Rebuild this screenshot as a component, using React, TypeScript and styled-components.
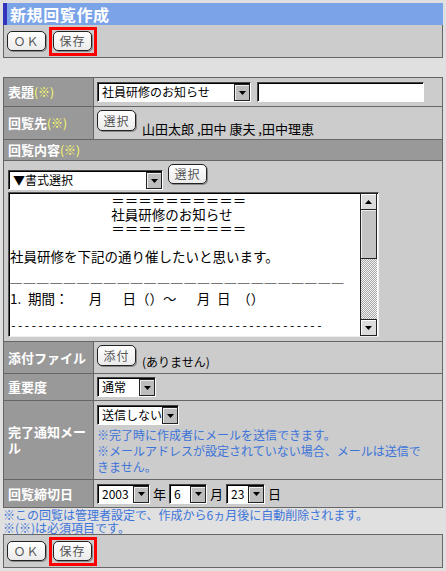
import styled, { createGlobalStyle } from 'styled-components';

const GlobalStyle = createGlobalStyle`
  body {
    margin: 0;
    background: #e0e0e0;
    font-family: 'Noto Sans CJK JP', sans-serif;
    font-size: 12px;
    color: #000;
  }
`;

const Page = styled.div`
  width: 440px;
  padding: 3px;
`;

const TitleBar = styled.h1`
  margin: 0;
  height: 22px;
  box-sizing: border-box;
  padding-left: 3px;
  border-left: 4px solid #3333bb;
  background: #7ba4e8;
  color: #fff;
  font-size: 16px;
  font-weight: bold;
  line-height: 22px;
  letter-spacing: 0.6px;
`;

const ButtonBar = styled.div<{ $closed?: boolean }>`
  display: flex;
  align-items: center;
  gap: 3px;
  height: ${(p) => (p.$closed ? 34 : 33)}px;
  box-sizing: border-box;
  padding: 0 3px;
  background: #ccc;
  border: 1px solid #666;
  border-top: ${(p) => (p.$closed ? '1px solid #666' : 'none')};
`;

const Btn = styled.button`
  height: 20px;
  min-width: 39px;
  padding: 0 4px;
  border: 1px solid #222;
  border-radius: 5px;
  background: linear-gradient(#ffffff, #ebebeb);
  box-shadow: 1px 1px 0 #8a8a8a;
  font-family: inherit;
  font-size: 12px;
  line-height: 18px;
  color: #555;
  letter-spacing: 1px;
  cursor: pointer;
`;

const RowBtn = styled(Btn)`
  height: 21px;
  flex-shrink: 0;
`;

const Highlight = styled.span`
  display: inline-flex;
  padding: 1px 2px 2px 1px;
  border: 3px solid #ff0000;
`;

const Form = styled.div`
  margin-top: 19px;
  border: 1px solid #666;
  background: #ccc;
`;

const Row = styled.div<{ $h: number }>`
  display: grid;
  grid-template-columns: 90px 1fr;
  min-height: ${(p) => p.$h}px;
  border-top: 1px solid #666;

  &:first-child {
    border-top: none;
  }
`;

const FullRow = styled.div<{ $h: number }>`
  min-height: ${(p) => p.$h}px;
  border-top: 1px solid #666;
`;

const Label = styled.div`
  display: flex;
  align-items: center;
  padding: 0 4px;
  background: #999;
  border-right: 1px solid #666;
  color: #fff;
  font-size: 13px;
  font-weight: bold;
  line-height: 16px;
`;

const HeaderLabel = styled(Label)`
  height: 20px;
  border-right: none;
`;

const Required = styled.span`
  color: #ffff66;
  font-size: 12px;
  font-weight: normal;
`;

const Value = styled.div`
  display: flex;
  align-items: center;
  gap: 3px;
  padding: 0 3px;
`;

const TopValue = styled(Value)`
  align-items: flex-start;
  padding-top: 3px;
`;

const StackValue = styled.div`
  display: flex;
  flex-direction: column;
  align-items: flex-start;
  padding: 4px 12px 0 3px;
`;

const SideText = styled.span<{ $top: number; $size: number }>`
  margin: ${(p) => p.$top}px 0 0 3px;
  font-size: ${(p) => p.$size}px;
  line-height: 14px;
  white-space: nowrap;
`;

const UnitText = styled.span`
  font-size: 13px;
`;

const Hint = styled.p`
  margin: 2px 0 0;
  color: #3c74d9;
  font-size: 12px;
  line-height: 16px;
`;

const SelectBox = styled.div<{ $w: number }>`
  display: inline-flex;
  flex-shrink: 0;
  width: ${(p) => p.$w}px;
  height: 20px;
  box-sizing: border-box;
  border: 1px solid;
  border-color: #444 #fff #fff #444;
  box-shadow: inset 1px 1px 0 #000;
  background: #fff;
  font-size: 12px;
`;

const SelectText = styled.span`
  flex: 1;
  padding-left: 4px;
  line-height: 18px;
  white-space: nowrap;
  overflow: hidden;
`;

const SelectArrow = styled.span`
  display: flex;
  align-items: center;
  justify-content: center;
  width: 14px;
  margin: 1px 0 0;
  background: #bdbdbd;
  border: 1px solid #222;
  box-shadow: inset 1px 1px 0 #eee;
`;

const TextInput = styled.input`
  width: 167px;
  height: 20px;
  box-sizing: border-box;
  margin-left: 3px;
  border: 1px solid;
  border-color: #444 #fff #fff #444;
  box-shadow: inset 1px 1px 0 #000;
  background: #fff;
  outline: none;
`;

const EditorCell = styled.div`
  padding: 3px 4px 4px;
`;

const EditorTools = styled.div`
  display: flex;
  align-items: flex-start;
  gap: 5px;
  margin-bottom: 2px;
`;

const ToolSelect = styled.div`
  margin-top: 6px;
`;

const TextArea = styled.div`
  display: flex;
  width: 371px;
  height: 145px;
  box-sizing: border-box;
  border: 1px solid;
  border-color: #555 #eee #eee #555;
  box-shadow: inset 1px 1px 0 #000;
  background: #fff;
  overflow: hidden;
`;

const TextBody = styled.div`
  flex: 1;
  padding: 0 0 0 1px;
  font-size: 13.5px;
  line-height: 14px;
  overflow: hidden;
`;

const Line = styled.div`
  height: 14px;
  white-space: pre;
`;

const RuleLine = styled(Line)`
  font-size: 12px;
  letter-spacing: 1.4px;
`;

const DashLine = styled(Line)`
  font-family: 'Liberation Mono', monospace;
  font-size: 11.33px;
`;

const ScrollBar = styled.div`
  display: flex;
  flex-direction: column;
  width: 16px;
  margin-right: 1px;
  border-left: 1px solid #222;
`;

const ScrollBtn = styled.div`
  display: flex;
  align-items: center;
  justify-content: center;
  height: 15px;
  background: #dcdcdc;
  border: 1px solid #222;
  border-left: none;
  box-shadow: inset 1px 1px 0 #fff;
`;

const Thumb = styled.div`
  height: 48px;
  background: #c4c4c4;
  border: 1px solid #222;
  border-left: none;
  border-top: none;
  box-shadow: inset 1px 1px 0 #eee;
`;

const Track = styled.div`
  flex: 1;
  background: repeating-conic-gradient(#a8a8a8 0 25%, #f2f2f2 0 50%) 0 0 / 2px 2px;
`;

const Notes = styled.div`
  color: #3c74d9;
  font-size: 12px;
  line-height: 13px;
`;

function Arrow({ up }: { up?: boolean }) {
  return (
    <svg width="7" height="4" viewBox="0 0 7 4">
      <polygon points={up ? '0,4 7,4 3.5,0' : '0,0 7,0 3.5,4'} fill="#000" />
    </svg>
  );
}

function Select({ w, children }: { w: number; children: React.ReactNode }) {
  return (
    <SelectBox $w={w}>
      <SelectText>{children}</SelectText>
      <SelectArrow>
        <Arrow />
      </SelectArrow>
    </SelectBox>
  );
}

const headLines = [
  '　　　　　　　\u2002＝＝＝＝＝＝＝＝＝＝',
  '　　　　　　　\u2002社員研修のお知らせ',
  '　　　　　　　\u2002＝＝＝＝＝＝＝＝＝＝',
  '',
  '社員研修を下記の通り催したいと思います。',
  '',
];

function ActionBar({ closed }: { closed?: boolean }) {
  return (
    <ButtonBar $closed={closed}>
      <Btn>ＯＫ</Btn>
      <Highlight>
        <Btn>保存</Btn>
      </Highlight>
    </ButtonBar>
  );
}

function App() {
  return (
    <Page>
      <GlobalStyle />
      <TitleBar>新規回覧作成</TitleBar>
      <ActionBar />

      <Form>
        <Row $h={28}>
          <Label>
            表題<Required>(※)</Required>
          </Label>
          <Value>
            <Select w={154}>社員研修のお知らせ</Select>
            <TextInput type="text" />
          </Value>
        </Row>
        <Row $h={32}>
          <Label>
            回覧先<Required>(※)</Required>
          </Label>
          <TopValue>
            <RowBtn>選択</RowBtn>
            <SideText $top={12} $size={13}>
              山田太郎 ,田中 康夫 ,田中理恵
            </SideText>
          </TopValue>
        </Row>
        <FullRow $h={20}>
          <HeaderLabel>
            回覧内容<Required>(※)</Required>
          </HeaderLabel>
        </FullRow>
        <FullRow $h={180}>
          <EditorCell>
            <EditorTools>
              <ToolSelect>
                <Select w={155}>▼書式選択</Select>
              </ToolSelect>
              <Btn>選択</Btn>
            </EditorTools>
            <TextArea>
              <TextBody>
                {headLines.map((text, i) => (
                  <Line key={i}>{text}</Line>
                ))}
                <RuleLine>{'─'.repeat(25)}</RuleLine>
                <Line>{'1.\u2002期間：　\u2002月　\u2002日（）～　\u2002月\u2002日\u2002（）'}</Line>
                <Line />
                <DashLine>{'-'.repeat(46)}</DashLine>
              </TextBody>
              <ScrollBar>
                <ScrollBtn>
                  <Arrow up />
                </ScrollBtn>
                <Thumb />
                <Track />
                <ScrollBtn>
                  <Arrow />
                </ScrollBtn>
              </ScrollBar>
            </TextArea>
          </EditorCell>
        </FullRow>
        <Row $h={31}>
          <Label>添付ファイル</Label>
          <TopValue>
            <RowBtn>添付</RowBtn>
            <SideText $top={10} $size={12}>
              (ありません)
            </SideText>
          </TopValue>
        </Row>
        <Row $h={26}>
          <Label>重要度</Label>
          <Value>
            <Select w={59}>通常</Select>
          </Value>
        </Row>
        <Row $h={78}>
          <Label>完了通知メール</Label>
          <StackValue>
            <Select w={82}>送信しない</Select>
            <Hint>
              ※完了時に作成者にメールを送信できます。
              <br />
              ※メールアドレスが設定されていない場合、メールは送信できません。
            </Hint>
          </StackValue>
        </Row>
        <Row $h={27}>
          <Label>回覧締切日</Label>
          <Value>
            <Select w={53}>2003</Select>
            <UnitText>年</UnitText>
            <Select w={38}>6</Select>
            <UnitText>月</UnitText>
            <Select w={39}>23</Select>
            <UnitText>日</UnitText>
          </Value>
        </Row>
      </Form>

      <Notes>
        ※この回覧は管理者設定で、作成から6ヵ月後に自動削除されます。
        <br />
        ※(※)は必須項目です。
      </Notes>
      <ActionBar closed />
    </Page>
  );
}

export default App;
